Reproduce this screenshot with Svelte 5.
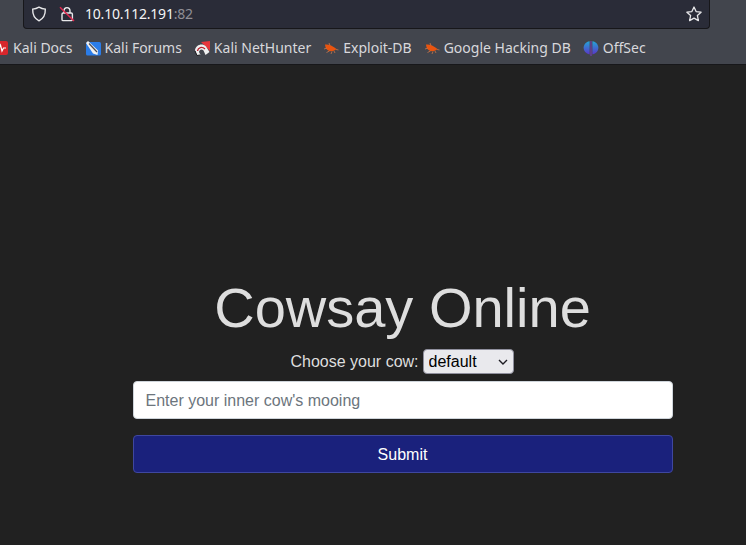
<script>
  const bookmarks = [
    { name: "Kali Docs", icon: "docs" },
    { name: "Kali Forums", icon: "forums" },
    { name: "Kali NetHunter", icon: "hunter" },
    { name: "Exploit-DB", icon: "bug" },
    { name: "Google Hacking DB", icon: "bug" },
    { name: "OffSec", icon: "offsec" }
  ];
</script>

<div class="page">
  <header class="chrome">
    <div class="toolbar">
      <div class="urlbar">
        <svg class="shield" width="16" height="16" viewBox="0 0 16 16" fill="none" stroke="#e8e8ea" stroke-width="1.4">
          <path d="M8 1.2 C10 2.4 12.2 3 14.3 3.1 C14.5 8.5 12.5 12.6 8 14.8 C3.5 12.6 1.5 8.5 1.7 3.1 C3.8 3 6 2.4 8 1.2 Z" />
        </svg>
        <svg class="lock" width="16" height="16" viewBox="0 0 16 16" fill="none">
          <path d="M5 7 V4.8 C5 2.9 6.3 1.6 8 1.6 C9.7 1.6 11 2.9 11 4.8 V7" stroke="#e8e8ea" stroke-width="1.4" />
          <rect x="3" y="7" width="10.4" height="7.6" rx="1.2" stroke="#e8e8ea" stroke-width="1.4" />
          <path d="M1 1.2 L15 15" stroke="#e22850" stroke-width="1.5" />
        </svg>
        <span class="address">10.10.112.191<span class="port">:82</span></span>
        <svg class="star" width="16" height="16" viewBox="0 0 16 16" fill="none" stroke="#e8e8ea" stroke-width="1.3" stroke-linejoin="round">
          <path d="M8 1 L10.1 5.6 L15.1 6.2 L11.4 9.6 L12.4 14.6 L8 12.1 L3.6 14.6 L4.6 9.6 L0.9 6.2 L5.9 5.6 Z" />
        </svg>
      </div>
    </div>
    <nav class="bookmarks">
      {#each bookmarks as b}
        <span class="bookmark">
          <svg width="16" height="16" viewBox="0 0 16 16">
            {#if b.icon === "docs"}
              <rect x="0" y="1" width="15" height="14" rx="2" fill="#d8262c" />
              <path d="M2 8.5 H6 L7.5 5 L9 11 L10.5 8 H13" fill="none" stroke="#fff" stroke-width="1.2" />
            {:else if b.icon === "forums"}
              <rect x="1" y="2" width="15" height="13.5" rx="1.5" fill="#2b7de9" />
              <path d="M1 3 L3 1 L13 10.5 L12.5 15 L8 13.5 Z" fill="#f2f2f2" />
              <path d="M4 3.5 L12 12" stroke="#4a4a52" stroke-width="1.2" />
            {:else if b.icon === "hunter"}
              <path d="M7 2 L16 1 L16 11 Z" fill="#e8363c" />
              <path d="M1 10 C2 5 8 2.5 12 6.5 L15.5 12 L11.5 15 L9.5 10.5 C7.5 8.5 5.5 9.5 5 12 L6.5 15 L3 15.5 Z" fill="#f0f0f0" />
              <path d="M3.5 11 C4 7.5 8 6 11 9" fill="none" stroke="#b8202c" stroke-width="1.4" />
              <path d="M1 11 L3 15.5 L6 15" fill="none" stroke="#1c1c20" stroke-width="1" />
            {:else if b.icon === "bug"}
              <path d="M2 4.5 C6 4 10 6 13.5 9 C11 11.5 7 12 4.5 10 C3 8.8 2.2 6.8 2 4.5 Z" fill="#e9540f" />
              <path d="M1 9 L4 8 M3.5 12.5 L6.5 11 M8 14 L9 11.5 M12 13 L11 11 M6 3 L7 5.5 M15.5 10 L13 9.5" stroke="#c9764a" stroke-width="0.8" />
            {:else}
              <defs>
                <linearGradient id="off" x1="0" y1="0" x2="0" y2="1">
                  <stop offset="0" stop-color="#23a6d8" />
                  <stop offset="1" stop-color="#5a35c8" />
                </linearGradient>
              </defs>
              <path d="M6.6 1.2 C3 1.8 0.6 4.6 0.6 8 C0.6 11 2.8 13.4 6.6 14.4 Z" fill="url(#off)" />
              <path d="M9.4 1.2 C13 1.8 15.4 4.6 15.4 8 C15.4 11 13.2 13.4 9.4 14.4 Z" fill="url(#off)" />
              <path d="M8 1 V16" stroke="#7a3cc0" stroke-width="1" />
            {/if}
          </svg>
          <span>{b.name}</span>
        </span>
      {/each}
    </nav>
  </header>

  <main class="content">
    <h1>Cowsay Online</h1>
    <form class="cow-form" on:submit|preventDefault>
      <div class="choose">
        <label for="cow">Choose your cow:</label>
        <span class="select-wrap">
          <select id="cow">
            <option>default</option>
          </select>
          <svg class="chevron" width="10" height="6" viewBox="0 0 10 6" fill="none" stroke="#1c1b22" stroke-width="1.4">
            <path d="M1 1 L5 5 L9 1" />
          </svg>
        </span>
      </div>
      <input type="text" placeholder="Enter your inner cow's mooing" />
      <button type="submit">Submit</button>
    </form>
  </main>
</div>

<style>
  :global(body) {
    margin: 0;
    background: #212121;
  }

  .page {
    height: 545px;
    overflow: hidden;
    display: flex;
    flex-direction: column;
    background: #212121;
  }

  .chrome {
    background: #42454d;
    border-bottom: 1px solid #17171a;
    font-family: "Noto Sans", sans-serif;
  }

  .toolbar {
    padding: 0 36px 0 23px;
  }

  .urlbar {
    height: 28px;
    display: flex;
    align-items: center;
    background: #2a2c38;
    border: 1px solid #17171a;
    border-top: 0;
    border-radius: 0 0 4px 4px;
    padding: 0 7px;
  }

  .lock {
    margin-left: 12px;
  }

  .address {
    margin-left: 10px;
    margin-bottom: 1px;
    flex: 1;
    color: #f4f4f6;
    font-size: 14px;
    letter-spacing: -0.2px;
  }

  .port {
    color: #8f8f96;
  }

  .bookmarks {
    box-sizing: border-box;
    height: 35px;
    padding-top: 2px;
    display: flex;
    align-items: center;
    gap: 12px;
    margin-left: -7px;
    white-space: nowrap;
  }

  .bookmark {
    display: flex;
    align-items: center;
    gap: 4px;
    color: #d8d8dc;
    font-size: 14px;
  }

  .content {
    width: 540px;
    margin-left: 133px;
    padding-top: 209px;
    font-family: "Liberation Sans", Arial, sans-serif;
  }

  h1 {
    margin: 0;
    padding-right: 1px;
    text-align: center;
    color: #dedede;
    font-size: 56px;
    font-weight: 400;
    line-height: 67px;
  }

  .cow-form {
    display: flex;
    flex-direction: column;
  }

  .choose {
    display: flex;
    justify-content: center;
    align-items: center;
    gap: 4px;
    height: 25px;
    margin-top: 8px;
    padding-right: 2px;
    color: #dedede;
    font-size: 16px;
  }

  .select-wrap {
    position: relative;
    display: flex;
  }

  select {
    appearance: none;
    box-sizing: border-box;
    width: 91px;
    height: 25px;
    padding: 0 5px;
    font-family: inherit;
    font-size: 16px;
    color: #000;
    background-color: #e9e9ed;
    border: 1px solid #8f8f9d;
    border-radius: 4px;
  }

  .chevron {
    position: absolute;
    right: 6px;
    top: 10px;
    pointer-events: none;
  }

  input {
    box-sizing: border-box;
    height: 38px;
    margin-top: 7px;
    padding: 8px 12px 6px 11.5px;
    font-family: inherit;
    font-size: 16px;
    background: #fff;
    border: 1px solid #ced4da;
    border-radius: 4px;
  }

  input::placeholder {
    color: #6c757d;
    opacity: 1;
  }

  button {
    height: 38px;
    margin-top: 16px;
    padding: 2px 7px 0 6px;
    font-family: inherit;
    font-size: 16px;
    color: #fff;
    background: #1a217c;
    border: 1px solid #3f479f;
    border-radius: 4px;
  }
</style>
